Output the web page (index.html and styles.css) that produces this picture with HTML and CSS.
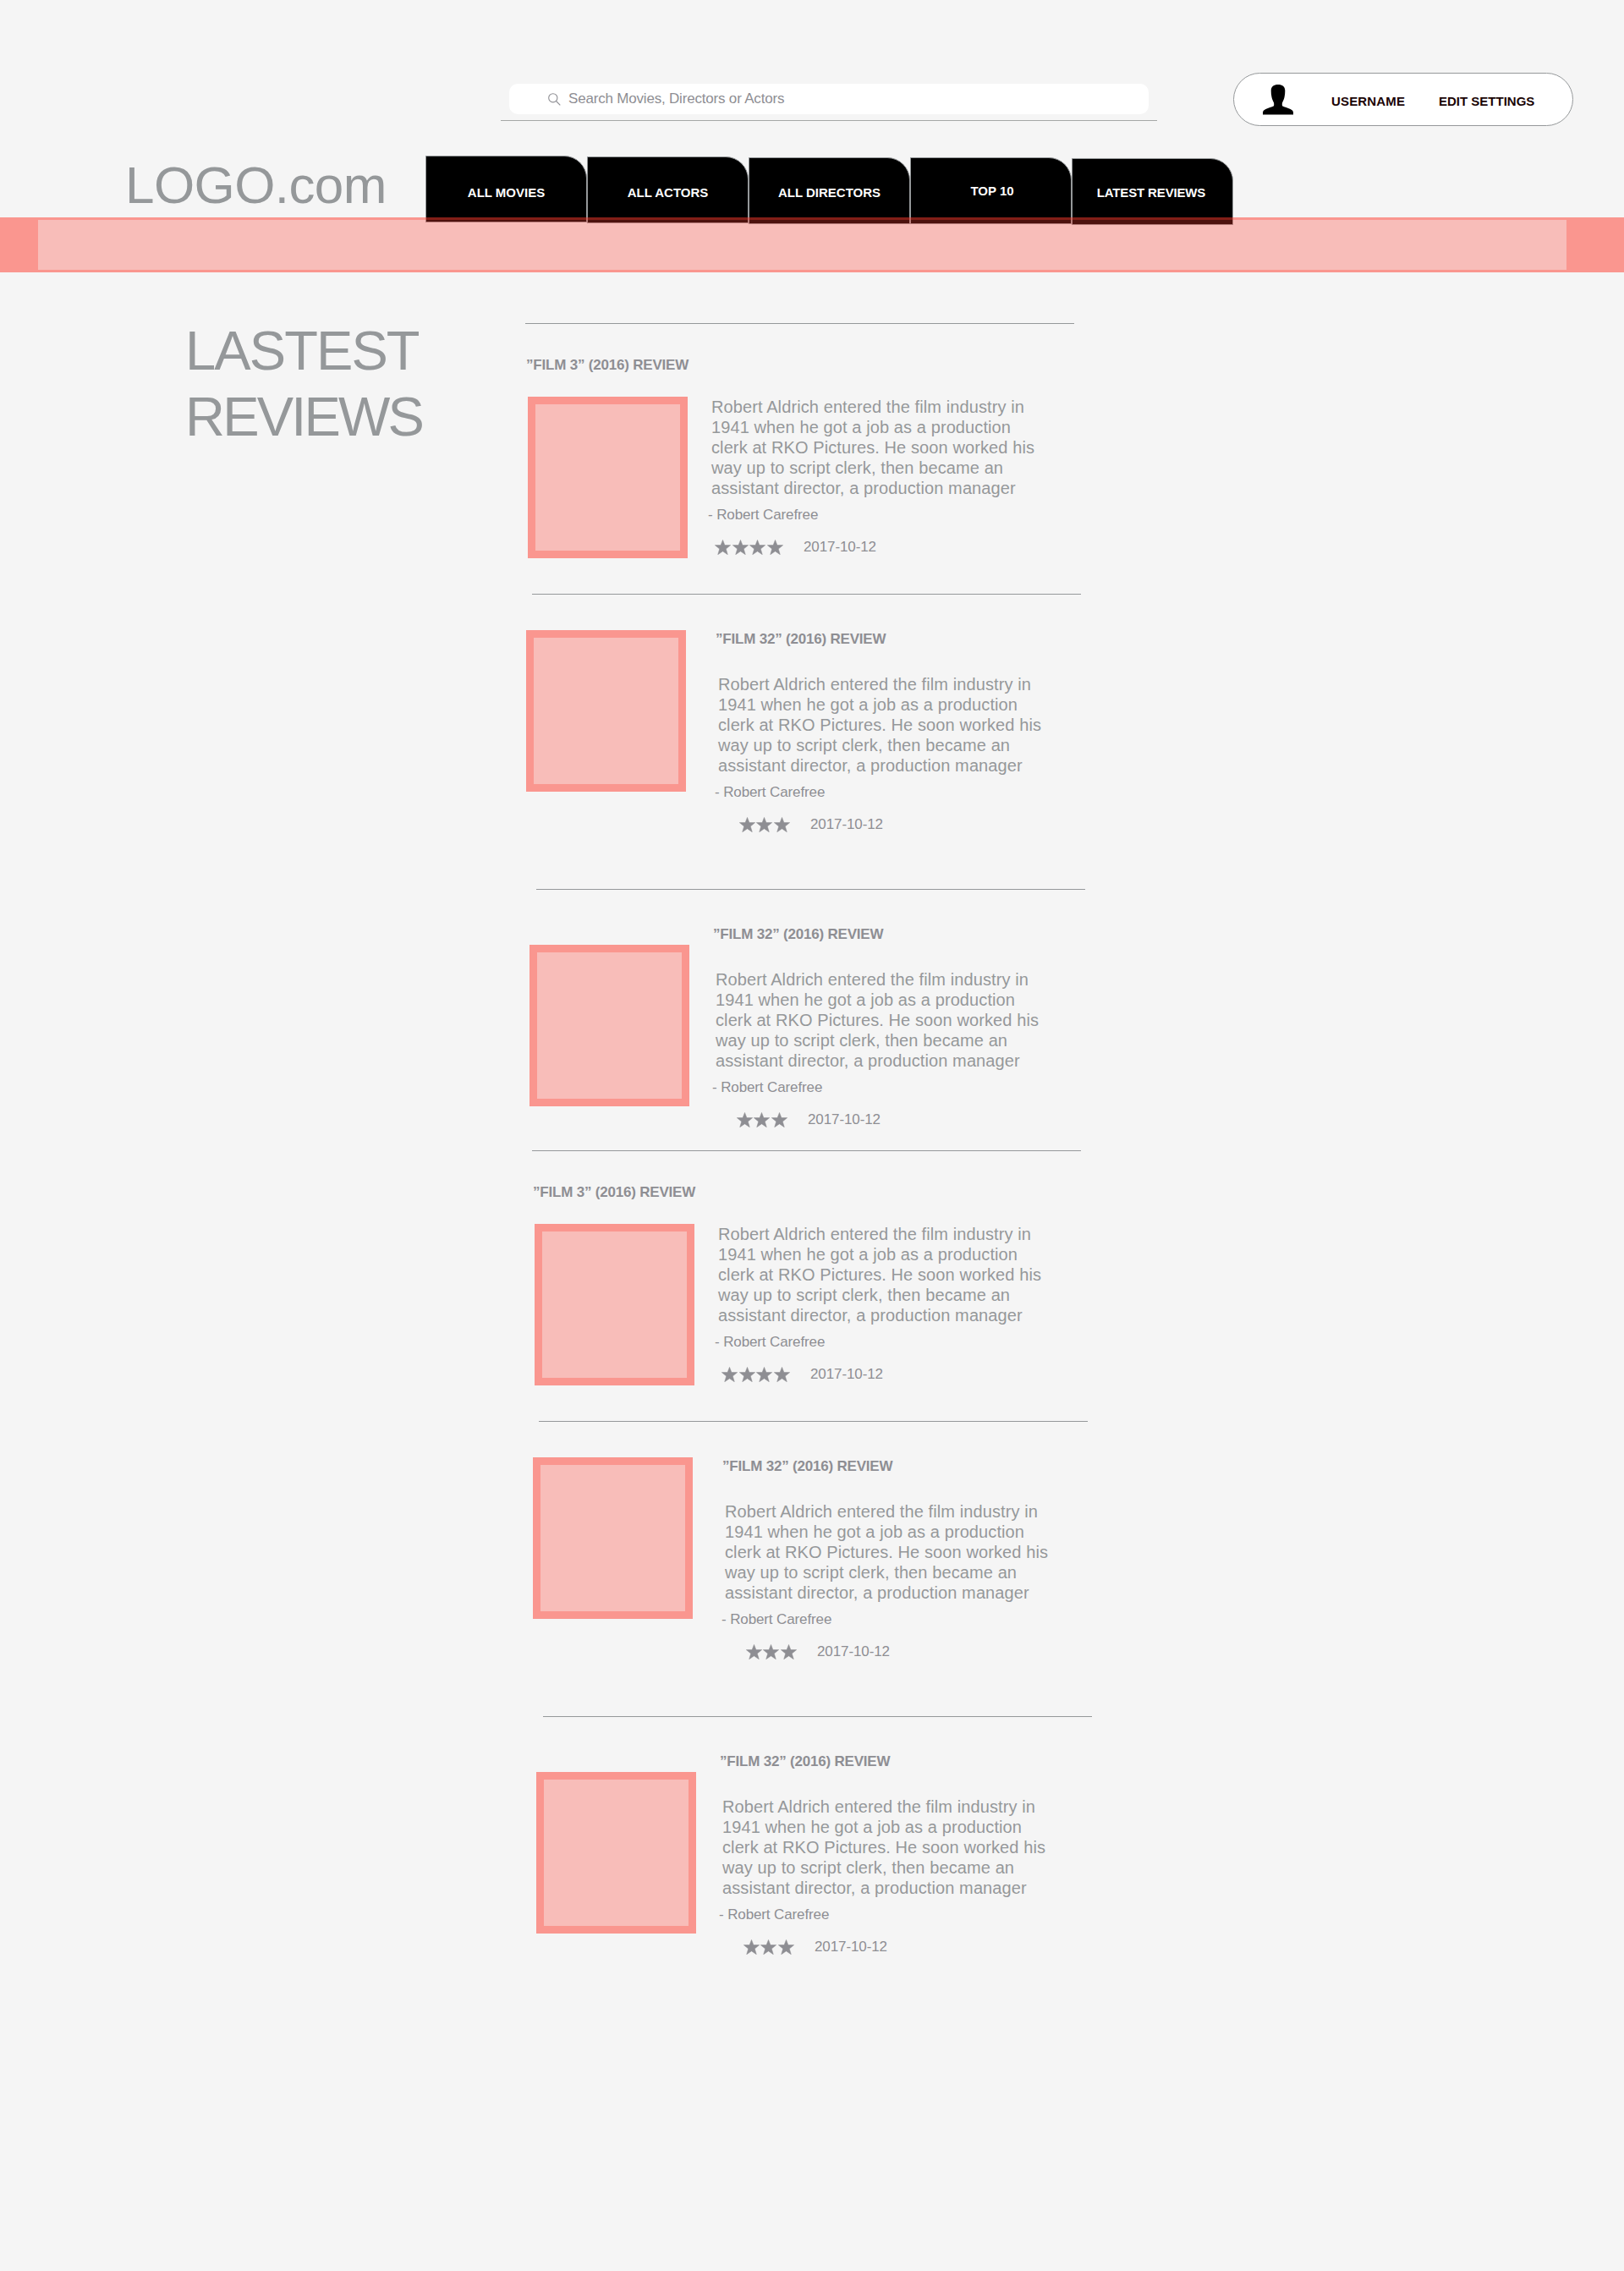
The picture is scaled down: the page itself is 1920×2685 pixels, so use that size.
FILE: index.html
```html
<!DOCTYPE html>
<html lang="en">
<head>
<meta charset="utf-8">
<title>LOGO.com – Latest reviews</title>
<link rel="stylesheet" href="styles.css">
</head>
<body>
<svg class="defs" width="0" height="0" aria-hidden="true">
  <symbol id="star" viewBox="0 0 19 18"><path d="M9.500 .4l2.400 6.200h6.800l-5.400 4.400 2 6.700-5.800-3.900-5.800 3.900 2-6.700L.3 6.600h6.800z"/></symbol>
</svg>

<header>
  <div class="topbar">
    <div class="search">
      <div class="search-box">
        <svg class="search-icon" viewBox="0 0 15 15"><circle cx="5.800" cy="5.800" r="5.100"/><path d="M9.500 9.500L14.300 14.300"/></svg>
        <span>Search Movies, Directors or Actors</span>
      </div>
    </div>
    <div class="account">
      <svg class="avatar" viewBox="0 0 36 36"><path d="M18 0c5 0 8.300 2.400 8.300 7.200 0 2.600-.2 5.200-.8 7.800-.5 2.200-1.500 4.500-2.400 6.300-.4 1.200-.4 2.500-.1 4 2.500 1.500 6.400 2.200 9.600 3.800 2.300 1.100 3.400 2.500 3.400 4V35.500H0V33.100c0-1.500 1.100-2.900 3.400-4 3.200-1.600 7.100-2.300 9.600-3.800.3-1.500.3-2.800-.1-4-.9-1.800-1.900-4.100-2.400-6.300-.6-2.600-.8-5.200-.8-7.800C9.700 2.400 13 0 18 0z"/></svg>
      <span class="username">USERNAME</span>
      <span class="settings">EDIT SETTINGS</span>
    </div>
  </div>
  <div class="navrow">
    <div class="logo">LOGO.com</div>
    <nav>
      <a class="tab t1">ALL MOVIES</a>
      <a class="tab t2">ALL ACTORS</a>
      <a class="tab t3">ALL DIRECTORS</a>
      <a class="tab t4">TOP 10</a>
      <a class="tab t5">LATEST REVIEWS</a>
    </nav>
  </div>
  <div class="band"></div>
</header>

<main>
  <h1><span class="l1">LASTEST</span><span class="l2">REVIEWS</span></h1>
  <div class="reviews">
    <section class="group">
      <article class="review a">
        <div class="rule"></div>
        <h2>”FILM 3” (2016) REVIEW</h2>
        <div class="row">
          <div class="poster"></div>
          <div class="body">
            <p>Robert Aldrich entered the film industry in<br>1941 when he got a job as a production<br>clerk at RKO Pictures. He soon worked his<br>way up to script clerk, then became an<br>assistant director, a production manager</p>
            <div class="author">- Robert Carefree</div>
            <div class="meta"><div class="stars"><svg><use href="#star"/></svg><svg><use href="#star"/></svg><svg><use href="#star"/></svg><svg><use href="#star"/></svg></div><time>2017-10-12</time></div>
          </div>
        </div>
      </article>
      <article class="review b">
        <div class="rule"></div>
        <div class="row">
          <div class="poster"></div>
          <div class="body">
            <h2>”FILM 32” (2016) REVIEW</h2>
            <p>Robert Aldrich entered the film industry in<br>1941 when he got a job as a production<br>clerk at RKO Pictures. He soon worked his<br>way up to script clerk, then became an<br>assistant director, a production manager</p>
            <div class="author">- Robert Carefree</div>
            <div class="meta"><div class="stars"><svg><use href="#star"/></svg><svg><use href="#star"/></svg><svg><use href="#star"/></svg></div><time>2017-10-12</time></div>
          </div>
        </div>
      </article>
      <article class="review c">
        <div class="rule"></div>
        <div class="row">
          <div class="poster"></div>
          <div class="body">
            <h2>”FILM 32” (2016) REVIEW</h2>
            <p>Robert Aldrich entered the film industry in<br>1941 when he got a job as a production<br>clerk at RKO Pictures. He soon worked his<br>way up to script clerk, then became an<br>assistant director, a production manager</p>
            <div class="author">- Robert Carefree</div>
            <div class="meta"><div class="stars"><svg><use href="#star"/></svg><svg><use href="#star"/></svg><svg><use href="#star"/></svg></div><time>2017-10-12</time></div>
          </div>
        </div>
      </article>
    </section>
    <section class="group shifted">
      <article class="review a">
        <div class="rule"></div>
        <h2>”FILM 3” (2016) REVIEW</h2>
        <div class="row">
          <div class="poster"></div>
          <div class="body">
            <p>Robert Aldrich entered the film industry in<br>1941 when he got a job as a production<br>clerk at RKO Pictures. He soon worked his<br>way up to script clerk, then became an<br>assistant director, a production manager</p>
            <div class="author">- Robert Carefree</div>
            <div class="meta"><div class="stars"><svg><use href="#star"/></svg><svg><use href="#star"/></svg><svg><use href="#star"/></svg><svg><use href="#star"/></svg></div><time>2017-10-12</time></div>
          </div>
        </div>
      </article>
      <article class="review b">
        <div class="rule"></div>
        <div class="row">
          <div class="poster"></div>
          <div class="body">
            <h2>”FILM 32” (2016) REVIEW</h2>
            <p>Robert Aldrich entered the film industry in<br>1941 when he got a job as a production<br>clerk at RKO Pictures. He soon worked his<br>way up to script clerk, then became an<br>assistant director, a production manager</p>
            <div class="author">- Robert Carefree</div>
            <div class="meta"><div class="stars"><svg><use href="#star"/></svg><svg><use href="#star"/></svg><svg><use href="#star"/></svg></div><time>2017-10-12</time></div>
          </div>
        </div>
      </article>
      <article class="review c">
        <div class="rule"></div>
        <div class="row">
          <div class="poster"></div>
          <div class="body">
            <h2>”FILM 32” (2016) REVIEW</h2>
            <p>Robert Aldrich entered the film industry in<br>1941 when he got a job as a production<br>clerk at RKO Pictures. He soon worked his<br>way up to script clerk, then became an<br>assistant director, a production manager</p>
            <div class="author">- Robert Carefree</div>
            <div class="meta"><div class="stars"><svg><use href="#star"/></svg><svg><use href="#star"/></svg><svg><use href="#star"/></svg></div><time>2017-10-12</time></div>
          </div>
        </div>
      </article>
    </section>
  </div>
</main>
</body>
</html>
```
FILE: styles.css
```css
* { box-sizing: border-box; }
body {
  margin: 0;
  width: 1920px;
  height: 2685px;
  background: #f5f5f5;
  font-family: "Liberation Sans", Arial, Helvetica, sans-serif;
  color: #8e8e93;
}
h1, h2, p { margin: 0; }
.defs { display: block; }

/* Header */
.topbar {
  display: flex;
  align-items: flex-start;
  height: 184px;
  padding: 86px 0 0 592px;
}
.search {
  width: 776px;
  height: 57px;
  padding: 13px 10px 0;
  border-bottom: 1px solid #a5a7a6;
}
.search-box {
  display: flex;
  align-items: center;
  height: 36px;
  padding-left: 46px;
  border-radius: 10px;
  background: #fff;
  font-size: 17px;
  line-height: 20px;
  letter-spacing: -0.19px;
  white-space: nowrap;
}
.search-icon {
  width: 15px;
  height: 15px;
  margin-right: 9px;
  fill: none;
  stroke: #8e8e93;
  stroke-width: 1.1;
}
.account {
  display: flex;
  width: 402px;
  height: 63px;
  margin-left: 90px;
  padding: 13px 0 0 34px;
  border: 1px solid #95989a;
  border-radius: 32px;
  background: #fff;
  color: #1a0405;
  font-size: 15px;
  font-weight: 700;
  line-height: 20px;
  white-space: nowrap;
}
.avatar { width: 36px; height: 36px; fill: #000; }
.username { margin: 10px 0 0 45px; width: 127px; letter-spacing: 0.15px; }
.settings { margin-top: 10px; }
.navrow { display: flex; height: 73px; padding-left: 148px; }
.logo {
  width: 355px;
  color: #95989a;
  font-size: 62px;
  line-height: 70px;
  letter-spacing: -0.6px;
  white-space: nowrap;
}
nav { display: flex; align-items: flex-start; }
.tab {
  width: 191px;
  height: 79px;
  border: 1px solid #95989a;
  border-top-right-radius: 27px;
  background: #000;
  color: #fff;
  font-size: 15px;
  font-weight: 700;
  line-height: 20px;
  text-align: center;
  white-space: nowrap;
}
.t1 { padding-top: 33px; }
.t2 { margin-top: 1px; padding-top: 32px; }
.t3 { margin-top: 2px; padding-top: 31px; }
.t4 { margin-top: 2px; padding: 29px 0 0 3px; }
.t5 { margin-top: 3px; padding: 30px 3px 0 0; letter-spacing: -0.15px; }
.band {
  position: relative;
  height: 65px;
  border: solid rgba(255, 59, 48, .3);
  border-width: 3px 68px 3px 45px;
  background: rgba(255, 59, 48, .3);
}

/* Review list */
main { display: flex; padding-top: 60px; }
h1 {
  width: 621px;
  margin-top: -6px;
  padding-left: 219px;
  color: #95989a;
  font-size: 65px;
  font-weight: 400;
  line-height: 78px;
}
h1 span { display: block; }
.l1 { letter-spacing: -1.9px; }
.l2 { letter-spacing: -2.8px; }
.group { height: 978px; }
.shifted { margin-left: 8px; }
.rule { width: 649px; height: 1px; background: #95989a; }
.row { display: flex; align-items: flex-start; }
.poster {
  flex: none;
  width: 189px;
  height: 191px;
  border: 9px solid rgba(255, 59, 48, .3);
  background: rgba(255, 59, 48, .3);
}
h2 {
  font-size: 17px;
  font-weight: 700;
  line-height: 20px;
  letter-spacing: -0.2px;
  white-space: nowrap;
}
.a { height: 320px; }
.a h2 { margin: 39px 0 27px 1px; }
.a .poster { margin-left: 3px; }
.a .body { margin-left: 28px; }
.b { height: 349px; }
.b .rule { margin-left: 8px; }
.b .poster { margin: 42px 0 0 1px; }
.b .body { margin: 43px 0 0 38px; }
.c { height: 309px; }
.c .rule { margin-left: 13px; }
.c .poster { margin: 65px 0 0 5px; }
.c .body { margin: 43px 0 0 31px; }
.body { width: 420px; }
.body h2 { margin: 0 0 31px -3px; }
.body p {
  color: #95989a;
  font-size: 20px;
  line-height: 24px;
  letter-spacing: 0.1px;
  white-space: nowrap;
}
.author {
  margin: 10px 0 18px -4px;
  font-size: 17px;
  line-height: 20px;
  letter-spacing: -0.12px;
}
.meta { display: flex; font-size: 17px; line-height: 20px; letter-spacing: -0.1px; }
.stars {
  display: flex;
  justify-content: flex-end;
  gap: 1.5px;
  width: 84.5px;
  margin-right: 24.5px;
  padding-top: 1px;
}
.stars svg {
  width: 19px;
  height: 18px;
  fill: #8e8e93;
  stroke: #8e8e93;
  stroke-width: 0.5px;
}
```
